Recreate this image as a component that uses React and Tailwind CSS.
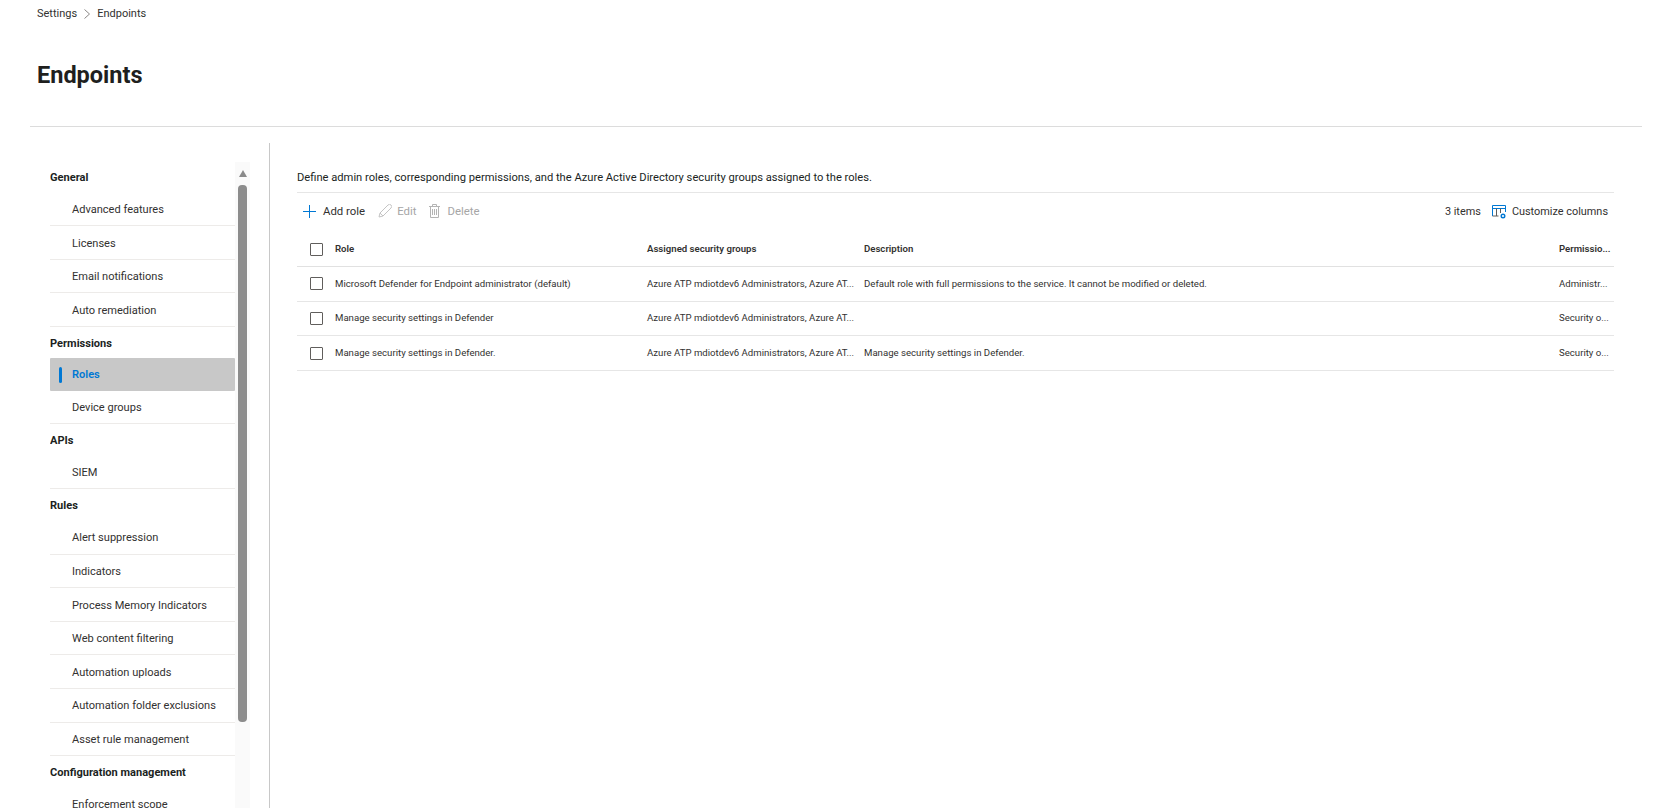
import React from 'react'

// ─── Data ────────────────────────────────────────────────────────────────────
const navSections = [
  { title: 'General', items: ['Advanced features', 'Licenses', 'Email notifications', 'Auto remediation'] },
  { title: 'Permissions', items: ['Roles', 'Device groups'] },
  { title: 'APIs', items: ['SIEM'] },
  {
    title: 'Rules',
    items: ['Alert suppression', 'Indicators', 'Process Memory Indicators', 'Web content filtering', 'Automation uploads', 'Automation folder exclusions', 'Asset rule management'],
  },
  { title: 'Configuration management', items: ['Enforcement scope'] },
]

const groups = 'Azure ATP mdiotdev6 Administrators, Azure AT...'
const roles = [
  { role: 'Microsoft Defender for Endpoint administrator (default)', desc: 'Default role with full permissions to the service. It cannot be modified or deleted.', perm: 'Administr...' },
  { role: 'Manage security settings in Defender', desc: '', perm: 'Security o...' },
  { role: 'Manage security settings in Defender.', desc: 'Manage security settings in Defender.', perm: 'Security o...' },
]

// ─── Icons ───────────────────────────────────────────────────────────────────
const PlusIcon = () => (
  <svg width="13" height="13" viewBox="0 0 13 13" className="shrink-0">
    <path d="M6.5 0v13M0 6.5h13" stroke="#0078d4" strokeWidth="1" fill="none" />
  </svg>
)
const PencilIcon = () => (
  <svg width="14" height="14" viewBox="0 0 14 14" className="shrink-0">
    <path d="M1 13l1-4 8-8a2.1 2.1 0 013 3l-8 8-4 1zM2 9l3 3" stroke="#c4c4c4" strokeWidth="1" fill="none" />
  </svg>
)
const TrashIcon = () => (
  <svg width="11" height="14" viewBox="0 0 11 14" className="shrink-0">
    <path d="M0 2.5h11M3.5 2.5V.5h4v2M1.5 2.5v11h8v-11M3.5 5v6M5.5 5v6M7.5 5v6" stroke="#b4b4b4" strokeWidth="1" fill="none" />
  </svg>
)
const ColumnsIcon = () => (
  <svg width="14" height="14" viewBox="0 0 14 14" className="shrink-0">
    <path d="M.5 11V.5h13V7M.5 3.5h13" stroke="#0078d4" strokeWidth="1" fill="none" />
    <path d="M4.5 3.5V11M8.5 3.5V8M.5 11h6" stroke="#605e5c" strokeWidth="1" fill="none" />
    <circle cx="11" cy="11" r="1.8" stroke="#0078d4" strokeWidth="1.4" fill="none" />
  </svg>
)

const Checkbox = () => <span className="block w-[13px] h-[13px] rounded-[1px] border border-[#605e5c] bg-white shrink-0" />

function NavItem({ label }) {
  if (label === 'Roles') {
    return (
      <div className="flex items-center h-[33px] mt-[-1px] pt-[2px] bg-[#c8c8c8] rounded-[1px]">
        <span className="w-[3px] h-4 ml-[9px] rounded-sm bg-[#0078d4]" />
        <span className="ml-[10px] font-semibold text-[#0078d4]">{label}</span>
      </div>
    )
  }
  return <div className="flex items-center h-[33.6px] pt-[3px] pl-[22px] border-b border-[#edebe9] text-[#323130]">{label}</div>
}

function Row({ role, desc, perm }) {
  return (
    <div className="flex items-center h-[34.7px] border-b border-[#e6e6e6] text-[9.62px] text-[#323130]">
      <div className="w-[38px] pl-[13px]"><Checkbox /></div>
      <div className="w-[312px] truncate">{role}</div>
      <div className="w-[217px] whitespace-nowrap">{groups}</div>
      <div className="w-[695px] whitespace-nowrap">{desc}</div>
      <div className="whitespace-nowrap">{perm}</div>
    </div>
  )
}

export default function App() {
  return (
    <div className="h-[808px] overflow-hidden bg-white text-[#201f1e] font-['Roboto','Liberation_Sans',sans-serif]">
      {/* Breadcrumb + title */}
      <div className="flex items-center gap-[7px] pl-[37px] pt-[6px] text-[11px] text-[#323130] leading-4">
        <span>Settings</span>
        <svg width="6" height="10" viewBox="0 0 6 10"><path d="M.5.5L5.5 5 .5 9.5" stroke="#8a8886" fill="none" /></svg>
        <span>Endpoints</span>
      </div>
      <h1 className="pl-[37px] mt-[37px] text-[23.5px] leading-8 font-bold">Endpoints</h1>
      <div className="ml-[30px] mr-[19px] mt-[35px] border-t border-[#dcdcdc]" />

      <div className="flex h-[666px] pl-[50px] mt-[16px]">
        {/* Settings navigation */}
        <nav className="relative w-[200px] pr-[15px] overflow-hidden text-[11.05px] shrink-0">
          <div className="pt-[18px]">
            {navSections.map((section) => (
              <div key={section.title}>
                <div className="flex items-center h-[31.6px] pt-[3px] font-bold text-[#201f1e]">{section.title}</div>
                {section.items.map((item) => <NavItem key={item} label={item} />)}
              </div>
            ))}
          </div>
          {/* Scrollbar */}
          <div className="absolute right-0 top-[19px] bottom-0 w-[15px] bg-[#fafafa]">
            <div className="mx-auto mt-[8px] w-0 h-0 border-x-[4.5px] border-x-transparent border-b-[7px] border-b-[#8a8a8a]" />
            <div className="mx-auto mt-[8px] w-[9px] h-[537px] rounded-[4px] bg-[#8c8c8c]" />
          </div>
        </nav>

        {/* Roles panel */}
        <main className="flex-1 ml-[19px] mr-[47px] pl-[27px] border-l border-[#c8c8c8] text-[11.17px]">
          <div className="pt-[27px] pb-[6px] h-[50px] flex items-center border-b border-[#e6e6e6] text-[#201f1e]">
            Define admin roles, corresponding permissions, and the Azure Active Directory security groups assigned to the roles.
          </div>
          <div className="flex items-center justify-between h-[37px] pl-[6px] pr-[6px]">
            <div className="flex items-center text-[11.4px]">
              <PlusIcon />
              <span className="ml-[7px] text-[#323130]">Add role</span>
              <span className="ml-[13px]"><PencilIcon /></span>
              <span className="ml-[5px] text-[#a6a6a6]">Edit</span>
              <span className="ml-[13px]"><TrashIcon /></span>
              <span className="ml-[7px] text-[#a6a6a6]">Delete</span>
            </div>
            <div className="flex items-center pt-[1px] text-[10.9px]">
              <span className="text-[#323130]">3 items</span>
              <span className="ml-[11px]"><ColumnsIcon /></span>
              <span className="ml-[6px] text-[#323130]">Customize columns</span>
            </div>
          </div>
          <div className="flex items-center h-[37px] pt-[2px] border-b border-[#e1e1e1] text-[9.62px] font-semibold text-[#323130]">
            <div className="w-[38px] pl-[13px]"><Checkbox /></div>
            <div className="w-[312px]">Role</div>
            <div className="w-[217px]">Assigned security groups</div>
            <div className="w-[695px]">Description</div>
            <div className="whitespace-nowrap">Permissio...</div>
          </div>
          {roles.map((r) => <Row key={r.role} {...r} />)}
        </main>
      </div>
    </div>
  )
}
